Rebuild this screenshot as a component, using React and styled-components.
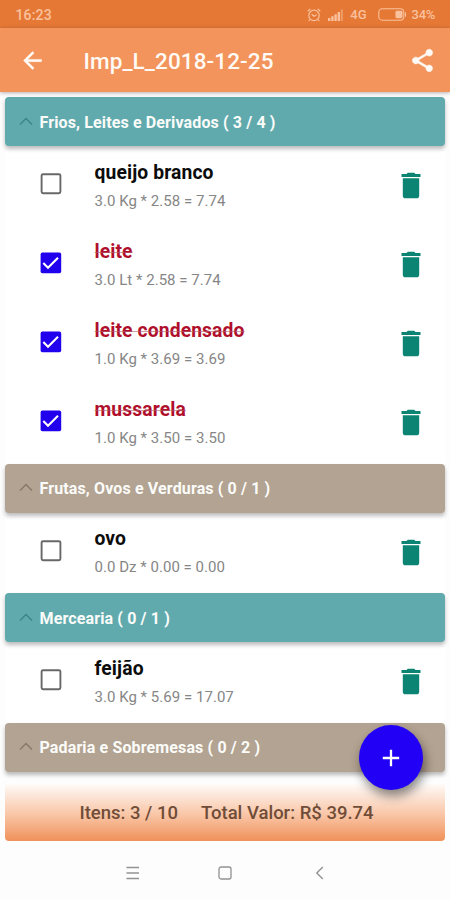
import styled, { createGlobalStyle } from 'styled-components'

const GlobalStyle = createGlobalStyle`
* {
box-sizing: border-box;
}
body {
margin: 0;
background: #fdfdfd;
font-family: Roboto, "Liberation Sans", sans-serif;
}
button {
border: 0;
padding: 0;
background: none;
font: inherit;
color: inherit;
}
svg {
display: block;
}
`

const Screen = styled.div`
display: flex;
flex-direction: column;
width: 450px;
height: 900px;
overflow: hidden;
`

const StatusBar = styled.div`
display: flex;
align-items: center;
height: 28px;
padding: 1px 15px 0 15.5px;
background: #e67835;
color: #f9c19d;
`

const Clock = styled.span`
flex: 1;
font-size: 14px;
font-weight: 500;
letter-spacing: 0.15px;
`

const Signals = styled.div`
display: flex;
align-items: center;
gap: 6px;
`

const Network = styled.span`
margin: 0 5px 0 0;
font-size: 13px;
font-weight: 500;
`

const Percent = styled.span`
margin-left: -1px;
font-size: 13px;
font-weight: 500;
letter-spacing: -0.3px;
`

const AppBar = styled.header`
position: relative;
z-index: 1;
display: flex;
align-items: center;
height: 64px;
padding: 0 14px 0 19px;
background: #f2945b;
color: #fffaf5;
box-shadow: 0 1px 4px rgba(0, 0, 0, 0.3);
`

const Title = styled.h1`
flex: 1;
margin: 2px 0 0 37.5px;
font-size: 22.5px;
font-weight: 500;
letter-spacing: 0.1px;
`

const List = styled.main`
flex: none;
height: 690px;
padding: 5px 5px 0;
`

const Panel = styled.section`
background: #fff;
`

const GroupHeader = styled.div`
display: flex;
align-items: center;
height: 49px;
margin-bottom: 1.5px;
padding-left: 14px;
border-radius: 4px;
background: ${({ $tan }) => ($tan ? '#b3a392' : '#60aaae')};
color: ${({ $tan }) => ($tan ? '#88796b' : '#3f8388')};
box-shadow: 0 3px 4px rgba(0, 0, 0, 0.27);
`

const GroupName = styled.h2`
margin: 1px 0 0 6.5px;
color: #fbfcf9;
font-size: 16px;
font-weight: 700;
letter-spacing: 0.13px;
`

const Row = styled.div`
display: flex;
height: 79px;
padding: 0 24px 0 31px;
`

const RowCheck = styled.div`
width: 58.5px;
padding-top: 20.5px;
`

const RowText = styled.div`
flex: 1;
padding-top: 12px;
`

const RowTrash = styled.div`
padding-top: 24.5px;
color: #0b8474;
`

const ItemName = styled.p`
margin: 0;
color: ${({ $done }) => ($done ? '#b00f2c' : '#0c0c0c')};
font-size: 19.3px;
font-weight: 700;
line-height: 26px;
letter-spacing: 0.12px;
text-decoration: ${({ $done }) => ($done ? 'line-through 1px rgba(176, 100, 110, 0.6)' : 'none')};
`

const ItemPrice = styled.p`
margin: 5px 0 0;
color: #868686;
font-size: 15px;
line-height: 20px;
letter-spacing: 0.03px;
`

const Footer = styled.footer`
display: flex;
align-items: center;
justify-content: center;
gap: 23px;
height: 58.5px;
margin: 0 5px;
padding: 4px 0 0 3px;
border-radius: 0 0 4px 4px;
background: linear-gradient(#fff 0%, #fdeee5 15%, #f9c6a7 55%, #f0915a 100%);
color: #704d38;
font-size: 18.5px;
font-weight: 500;
`

const AddButton = styled.button`
position: absolute;
z-index: 2;
left: 359px;
top: 725px;
display: flex;
align-items: center;
justify-content: center;
width: 64px;
height: 65px;
border-radius: 50%;
background: #2100f5;
color: #fff;
box-shadow: 2px 6px 11px rgba(0, 0, 0, 0.48);
`

const NavBar = styled.nav`
display: flex;
gap: 78px;
align-items: center;
flex: 1;
padding: 5px 0 0 126px;
color: #929292;
`

const AlarmIcon = () => (
    <svg width="14" height="14" viewBox="0 0 14 14" fill="none" stroke="currentColor" strokeWidth="1.2">
        <circle cx="7" cy="7.4" r="5.2" />
        <path d="M.7 3.2 3.3 1M13.3 3.2 10.7 1M4.6 6.2 7 8.3l2.6-1.6M2.8 11.6l-1 1.4M11.2 11.6l1 1.4" />
    </svg>
)

const SignalIcon = () => (
    <svg width="17" height="12" viewBox="0 0 17 12" fill="currentColor">
        <path d="M1 9h2.4v3H1zM4.2 7.3h2.4V12H4.2zM7.4 5.2h2.4V12H7.4zM10.6 3H13v9h-2.4z" />
        <path d="M13.8.5h2V12h-2z" opacity=".5" />
    </svg>
)

const BatteryIcon = () => (
    <svg width="29" height="13" viewBox="0 0 29 13" fill="none" stroke="currentColor" strokeWidth="1.1">
        <rect x=".8" y=".8" width="25" height="11.4" rx="3.4" />
        <rect x="17.5" y="2.8" width="7" height="7.4" rx="1.4" fill="currentColor" stroke="none" />
        <path d="M27.5 4.3v4.4" />
    </svg>
)

const BackIcon = () => (
    <svg width="27" height="27" viewBox="0 0 24 24" fill="currentColor" stroke="currentColor" strokeWidth=".4">
        <path d="M20 11H7.83l5.59-5.59L12 4l-8 8 8 8 1.41-1.41L7.83 13H20v-2z" />
    </svg>
)

const ShareIcon = () => (
    <svg width="27" height="27" viewBox="0 0 24 24" fill="currentColor" stroke="currentColor" strokeWidth=".5">
        <path d="M18 16.08c-.76 0-1.44.3-1.96.77L8.91 12.7c.05-.23.09-.46.09-.7s-.04-.47-.09-.7l7.05-4.11c.54.5 1.25.81 2.04.81 1.66 0 3-1.34 3-3s-1.34-3-3-3-3 1.34-3 3c0 .24.04.47.09.7L8.04 9.81C7.5 9.31 6.79 9 6 9c-1.66 0-3 1.34-3 3s1.34 3 3 3c.79 0 1.5-.31 2.04-.81l7.12 4.16c-.05.21-.08.43-.08.65 0 1.61 1.31 2.92 2.92 2.92s2.92-1.31 2.92-2.92-1.31-2.92-2.92-2.92z" />
    </svg>
)

const ChevronIcon = () => (
    <svg width="14" height="10" viewBox="0 0 14 10" fill="none" stroke="currentColor" strokeWidth="1.5">
        <path d="m1 7.5 6-6 6 6" />
    </svg>
)

const CheckIcon = ({ checked }) => (
    <svg width="30" height="30" viewBox="0 0 30 30" fill="none">
        {checked ? (
            <>
                <rect x="4.6" y="5.6" width="20.6" height="20.6" rx="1.8" fill="#2100ed" />
                <path d="m7.3 16.1 4.7 4.7 10-10" stroke="#fff" strokeWidth="2.1" />
            </>
        ) : (
            <rect x="5.6" y="6.2" width="18.8" height="19" rx="1.4" stroke="#686868" strokeWidth="1.9" />
        )}
    </svg>
)

const TrashIcon = () => (
    <svg width="20" height="27" viewBox="0 0 20 27" fill="currentColor">
        <path d="M.5 2h5L6.8.7h6.4L14.5 2h5v2.9H.5zM1.8 6.2h16.4v17.5c0 1.6-1 2.6-2.6 2.6H4.4c-1.6 0-2.6-1-2.6-2.6z" />
    </svg>
)

const PlusIcon = () => (
    <svg width="18" height="18" viewBox="0 0 18 18" stroke="currentColor" strokeWidth="2.3">
        <path d="M9 .8v16.4M.8 9h16.4" />
    </svg>
)

const MenuIcon = () => (
    <svg width="14" height="14" viewBox="0 0 14 14" stroke="currentColor" strokeWidth="1.3">
        <path d="M.5 1.5h12.5M.5 7h12.5M.5 12.5h12.5" />
    </svg>
)

const HomeIcon = () => (
    <svg width="14" height="14" viewBox="0 0 14 14" fill="none" stroke="currentColor" strokeWidth="1.3">
        <rect x="1" y="1" width="12" height="12" rx="2" />
    </svg>
)

const NavBackIcon = () => (
    <svg width="18" height="14" viewBox="0 0 18 14" fill="none" stroke="currentColor" strokeWidth="1.4">
        <path d="M12.8 1 6.8 7l6 6" />
    </svg>
)

const groups = [
    {
        name: 'Frios, Leites e Derivados ( 3 / 4 )',
        items: [
            { name: 'queijo branco', price: '3.0 Kg * 2.58 = 7.74' },
            { name: 'leite', price: '3.0 Lt * 2.58 = 7.74', done: true },
            { name: 'leite condensado', price: '1.0 Kg * 3.69 = 3.69', done: true },
            { name: 'mussarela', price: '1.0 Kg * 3.50 = 3.50', done: true },
        ],
    },
    {
        name: 'Frutas, Ovos e Verduras ( 0 / 1 )',
        tan: true,
        items: [{ name: 'ovo', price: '0.0 Dz * 0.00 = 0.00' }],
    },
    {
        name: 'Mercearia ( 0 / 1 )',
        items: [{ name: 'feijão', price: '3.0 Kg * 5.69 = 17.07' }],
    },
    {
        name: 'Padaria e Sobremesas ( 0 / 2 )',
        tan: true,
        items: [],
    },
]

const Item = ({ name, price, done }) => {
    return (
        <Row>
            <RowCheck><CheckIcon checked={done} /></RowCheck>
            <RowText>
                <ItemName $done={done}>{name}</ItemName>
                <ItemPrice>{price}</ItemPrice>
            </RowText>
            <RowTrash><TrashIcon /></RowTrash>
        </Row>
    )
}

export default function App() {
    return (
        <Screen>
            <GlobalStyle />
            <StatusBar>
                <Clock>16:23</Clock>
                <Signals>
                    <AlarmIcon />
                    <SignalIcon />
                    <Network>4G</Network>
                    <BatteryIcon />
                    <Percent>34%</Percent>
                </Signals>
            </StatusBar>
            <AppBar>
                <button><BackIcon /></button>
                <Title>Imp_L_2018-12-25</Title>
                <button><ShareIcon /></button>
            </AppBar>
            <List>
                {groups.map((group) => (
                    <Panel key={group.name}>
                        <GroupHeader $tan={group.tan}>
                            <ChevronIcon />
                            <GroupName>{group.name}</GroupName>
                        </GroupHeader>
                        {group.items.map((item) => <Item key={item.name} {...item} />)}
                    </Panel>
                ))}
            </List>
            <Footer>
                <span>Itens: 3 / 10</span>
                <span>Total Valor: R$ 39.74</span>
            </Footer>
            <NavBar>
                <MenuIcon />
                <HomeIcon />
                <NavBackIcon />
            </NavBar>
            <AddButton><PlusIcon /></AddButton>
        </Screen>
    )
}
